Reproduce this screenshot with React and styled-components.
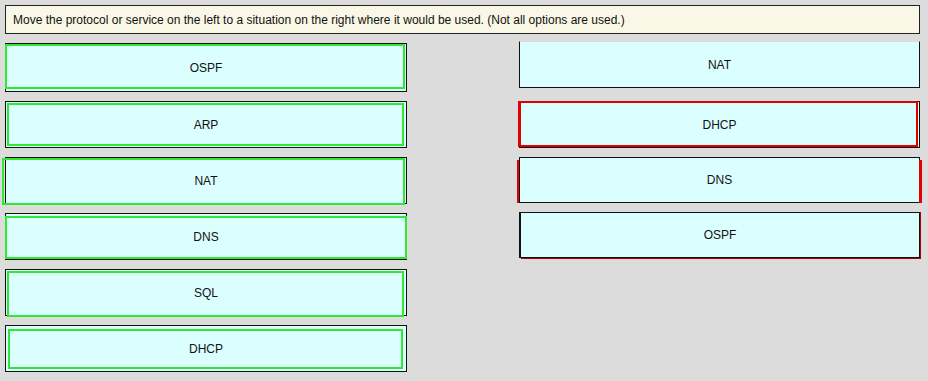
import styled, { createGlobalStyle } from "styled-components"

const GlobalStyle = createGlobalStyle`
	html, body {
		margin: 0;
		padding: 0;
		background: #dcdcdc;
	}
	body {
		font-family: "Liberation Sans", Arial, sans-serif;
	}
`

const Page = styled.div`
	width: 928px;
	height: 381px;
	padding: 5px 0 0 5px;
	box-sizing: border-box;
	background: #dcdcdc;
`

const Prompt = styled.div`
	width: 915px;
	height: 29px;
	box-sizing: border-box;
	display: flex;
	align-items: center;
	padding: 0 0 0 7px;

	background: #f9f8e6;
	border: 1px solid #222;
	font-size: 12px;
	color: #111;
`

const Board = styled.div`
	display: grid;
	grid-template-columns: 402px 401px;
	column-gap: 112px;
	align-items: start;
	margin-top: 9px;
`

const Column = styled.div`
	display: flex;
	flex-direction: column;
	gap: 9px;
`

const Tile = styled.div`
	position: relative;
	height: ${(p) => p.$height || 47}px;
	margin: ${(p) => p.$margin || "0"};
	box-sizing: border-box;
	display: flex;
	align-items: center;
	justify-content: center;

	background: #dbffff;
	border: 1px solid #111;
	border-top-color: ${(p) => (p.$noTop ? "#dcdcdc" : "#111")};
	border-left-width: ${(p) => p.$leftWidth || 1}px;
	font-size: 12px;
	color: #111;
`

const Outline = styled.div`
	position: absolute;
	pointer-events: none;
	border-style: solid;
	border-color: ${(p) => p.$color};
	border-width: ${(p) => p.$widths};
`

const GREEN = "#2fe82f"
const RED = "#e00000"

const sources = [
	{ label: "OSPF", box: [0, -1, 1, 2], height: 49 },
	{ label: "ARP", box: [1, 1, 2, 1] },
	{ label: "NAT", box: [0, -4, 1, -2] },
	{ label: "DNS", box: [2, -1, -1, 0] },
	{ label: "SQL", box: [1, 1, 2, -2] },
	{ label: "DHCP", box: [3, 2, 3, 2] },
]

const targets = [
	{ label: "NAT", noTop: true, margin: "-2px 0 4px 0" },
	{ label: "DHCP", box: [-1, -2, 1, 0], widths: "2px 2px 2px 3px", color: RED },
	{ label: "DNS", box: [2, -3, -3, -1], widths: "0 3px 0 2px", color: RED, height: 46 },
	{ label: "OSPF", box: [-1, 0, -2, -2], widths: "0 1px 1px 0", color: "#b00000", leftWidth: 2, height: 46 },
]

function Item({ label, box, widths = "2px", color = GREEN, noTop, leftWidth, height, margin }) {
	return (
		<Tile $noTop={noTop} $leftWidth={leftWidth} $height={height} $margin={margin}>
			{label}
			{box && (
				<Outline
					$color={color}
					$widths={widths}
					style={{ top: box[0], left: box[1], right: box[2], bottom: box[3] }}
				/>
			)}
		</Tile>
	)
}

export default function App() {
	return (
		<Page>
			<GlobalStyle />
			<Prompt>
				Move the protocol or service on the left to a situation on the right where it would be used. (Not all options are used.)
			</Prompt>
			<Board>
				<Column>
					{sources.map((item, index) => (
						<Item key={`source-${index}`} {...item} />
					))}
				</Column>
				<Column>
					{targets.map((item, index) => (
						<Item key={`target-${index}`} {...item} />
					))}
				</Column>
			</Board>
		</Page>
	)
}
